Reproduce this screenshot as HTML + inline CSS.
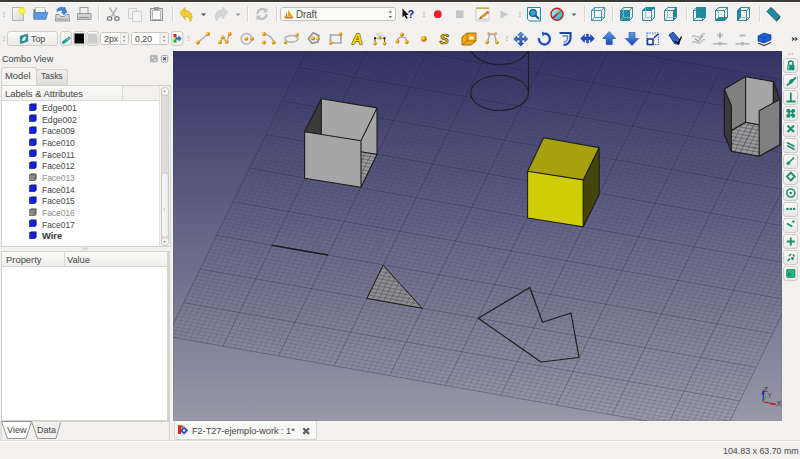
<!DOCTYPE html>
<html><head><meta charset="utf-8">
<style>
*{margin:0;padding:0;box-sizing:border-box}
html,body{width:800px;height:459px;overflow:hidden;background:#f2f1f0;font-family:"Liberation Sans",sans-serif;color:#3c3c3c}
.a{position:absolute}
#topbar{left:0;top:0;width:800px;height:2px;background:#3c3b37}
#topline{left:0;top:2px;width:800px;height:1px;background:#fbfbfa}
.sep{position:absolute;width:1px;background:#d8d6d2;border-right:1px solid #fcfcfb}
.grip{position:absolute;width:2px;height:6px;background:repeating-linear-gradient(#c9c7c2 0 1px,transparent 1px 2px)}
.btn{position:absolute;border:1px solid #cfccc7;border-radius:3px;background:linear-gradient(#fbfbfa,#ecebe9)}
.txt{position:absolute;white-space:nowrap;font-size:9px;color:#3c3c3c;line-height:1;-webkit-text-stroke:0.2px rgba(80,80,80,0.45)}
svg{position:absolute;overflow:visible}
</style></head><body>
<div id="topbar" class="a"></div><div id="topline" class="a"></div>
<svg class="a" style="left:0;top:0" width="800" height="27" viewBox="0 0 800 27">
<defs>
<linearGradient id="pg" x1="0" y1="0" x2="1" y2="1"><stop offset="0" stop-color="#fafafa"/><stop offset="1" stop-color="#d8d8d8"/></linearGradient>
<radialGradient id="yg"><stop offset="0" stop-color="#ffffa0"/><stop offset="0.5" stop-color="#f4f020"/><stop offset="1" stop-color="#f4f020" stop-opacity="0"/></radialGradient>
</defs>
<!-- grip -->
<g fill="#c8c6c1"><rect x="3" y="12" width="2" height="1"/><rect x="3" y="14" width="2" height="1"/><rect x="3" y="16" width="2" height="1"/></g>
<!-- new -->
<rect x="12.5" y="7.5" width="11" height="13" fill="url(#pg)" stroke="#b4b4b4"/>
<circle cx="21.8" cy="10.8" r="4.6" fill="url(#yg)"/>
<!-- open -->
<path d="M33.5 9h4.5l1 1h7v9h-12.5z" fill="#7a7a7a"/><rect x="35.5" y="7.5" width="9.5" height="6" fill="#f6f6f6" stroke="#b8b8b8" stroke-width="0.6"/>
<path d="M34 12.5h13.8l-2 6.8h-11.8z" fill="#5a9ae0" stroke="#3a72b8" stroke-width="0.7"/>
<!-- save -->
<path d="M56 14.5h3l1.5 2h4l1.5-2h3l0.5 6.5h-14z" fill="#d8d8d8" stroke="#8c8c8c" stroke-width="0.9"/><rect x="57" y="18.5" width="11" height="1.2" fill="#a0a0a0"/>
<path d="M57 9.5c2-2.5 5.5-3 7.5-1v-1.5l0 0 2.5 5.5h-5.5l1.5-1.5c-1.5-1-3.5-0.8-6 0.5z" fill="#3f86cc" stroke="#24599a" stroke-width="0.5"/>
<path d="M61.5 12h5l-2.5 3.5z" fill="#3f86cc"/>
<!-- print -->
<rect x="80" y="7.5" width="8" height="6" fill="#f0f0f0" stroke="#9c9c9c"/>
<path d="M77.5 13.5h13.5v6h-13.5z" fill="#d0d0d0" stroke="#9a9a9a"/><rect x="79" y="17" width="10" height="1" fill="#8a8a8a"/>
<!-- sep -->
<rect x="98" y="6" width="1" height="16" fill="#d9d7d3"/><rect x="99" y="6" width="1" height="16" fill="#fbfbfa"/>
<!-- cut -->
<g stroke="#7a7a7a" fill="none" stroke-width="1.2"><path d="M109.5 7.5l5.5 9M117 7.5l-5.5 9" stroke="#b8b8b8" stroke-width="1.5"/><ellipse cx="109.6" cy="18.6" rx="2.2" ry="1.9"/><ellipse cx="116.9" cy="18.6" rx="2.2" ry="1.9"/></g>
<!-- copy -->
<path d="M128.5 8.5h8v10h-8z" fill="#f0f0f0" stroke="#d0d0d0"/><path d="M132.5 11.5h9v10h-9z" fill="#f4f4f4" stroke="#cfcfcf"/>
<!-- paste -->
<path d="M150.5 8.5h12v12h-12z" fill="#e6e6e6" stroke="#8e8e8e"/><rect x="152.5" y="10.5" width="8" height="9" fill="#fafafa" stroke="#b4b4b4"/><rect x="154" y="7" width="5" height="3" fill="#9a9a9a"/>
<rect x="172" y="6" width="1" height="16" fill="#d9d7d3"/><rect x="173" y="6" width="1" height="16" fill="#fbfbfa"/>
<!-- undo -->
<path d="M180 12.5l5-5v3c4 0 7 2.5 7 6.5 0 2-1 3.5-2 4.5 0.5-3-1.5-5-5-5v3z" fill="#f2cd36" stroke="#d9a91a" stroke-width="0.8"/>
<path d="M201 13.5h5l-2.5 2.5z" fill="#4a4a4a"/>
<!-- redo -->
<path d="M227.5 12l-5-5v3c-4 0-7 2.5-7 6.5 0 2 1 3.5 2 4.5-0.5-3 1.5-5 5-5v3z" fill="#d6d6d6" stroke="#c4c4c4" stroke-width="0.6"/>
<path d="M235.5 13.5h5l-2.5 2.5z" fill="#9a9a9a"/>
<rect x="247" y="6" width="1" height="16" fill="#d9d7d3"/><rect x="248" y="6" width="1" height="16" fill="#fbfbfa"/>
<!-- refresh -->
<g fill="none" stroke="#c2c2c2" stroke-width="2.4"><path d="M257.5 14a5 5 0 0 1 9-3"/><path d="M266.5 14a5 5 0 0 1 -9 3"/></g>
<path d="M267.5 7.5v5h-5z" fill="#c2c2c2"/><path d="M256.5 20.5v-5h5z" fill="#c2c2c2"/>
<rect x="276" y="6" width="1" height="16" fill="#d9d7d3"/><rect x="277" y="6" width="1" height="16" fill="#fbfbfa"/>
<!-- combo -->
<rect x="280.5" y="7.5" width="115" height="13" rx="2.5" fill="#fbfbfa" stroke="#c2bfb9"/>
<path d="M288 9.5l4.5 6.5h-4.5z" fill="#e0b010"/><path d="M284.5 16.5h9l-1 2h-8z" fill="#c87818"/><path d="M286.5 11l1 5.5h-2z" fill="#d08a20"/>
<path d="M388.5 12.5l1.8-2 1.8 2z M388.5 16l1.8 2 1.8-2z" fill="#6a6a6a"/>
<!-- whats this -->
<path d="M402.5 8.5v9l2-2 1.8 3.5 1.4-0.7-1.7-3.3h2.8z" fill="#111"/>
<text x="407.5" y="17.5" font-family="Liberation Sans" font-weight="bold" font-size="11" fill="#1a2a90">?</text>
<g fill="#c8c6c1"><rect x="423" y="12" width="2" height="1"/><rect x="423" y="14" width="2" height="1"/><rect x="423" y="16" width="2" height="1"/></g>
<!-- record -->
<circle cx="437.8" cy="14.2" r="3.9" fill="#e8202a"/>
<rect x="456" y="10.5" width="7.5" height="7.5" fill="#c4c4c4"/>
<!-- macro edit -->
<rect x="476" y="8" width="13" height="13" rx="1" fill="#f8f8f4" stroke="#c4c0b8" stroke-width="0.8"/><rect x="476" y="7.5" width="13" height="1.6" fill="#c8a850"/><rect x="476.5" y="18.5" width="12" height="2" fill="#d8d8d4"/>
<path d="M480 17l6.5-5 1.5 1.5-6.5 5z" fill="#e89828" stroke="#a06010" stroke-width="0.4"/><path d="M479.3 18.8l0.7-1.8 1.4 1.4z" fill="#333"/><path d="M486.5 12l1.2-0.9 1.5 1.5-1 0.9z" fill="#e04040"/>
<path d="M500.5 10.5l8 4-8 4z" fill="#c8c8c8"/>
<g fill="#c8c6c1"><rect x="519" y="12" width="2" height="1"/><rect x="519" y="14" width="2" height="1"/><rect x="519" y="16" width="2" height="1"/></g>
<!-- fit all -->
<path d="M527.5 7.5h13v13.5h-11l-2-2z" fill="#eef6f8" stroke="#1e8aa0"/>
<circle cx="533" cy="13" r="3.3" fill="#3aa0d8" stroke="#1a5a88" stroke-width="1.2"/><path d="M535.5 15.5l3.5 3.5" stroke="#1a5a88" stroke-width="2"/>
<!-- drawstyle -->
<defs><linearGradient id="cy" x1="0" y1="0" x2="1" y2="1"><stop offset="0" stop-color="#e8f8f8"/><stop offset="0.55" stop-color="#40d0d8"/><stop offset="1" stop-color="#20b0c0"/></linearGradient></defs>
<circle cx="557" cy="14.2" r="5.8" fill="url(#cy)"/>
<circle cx="557" cy="14.2" r="6" fill="none" stroke="#c41c1c" stroke-width="1.4"/><path d="M552.8 18.4l8.4-8.4" stroke="#c41c1c" stroke-width="1.5"/><path d="M557.5 13.2l3.5-3.6" stroke="#f0e040" stroke-width="0.9"/>
<path d="M571.5 13.5h5l-2.5 2.5z" fill="#5a5a5a"/>
<rect x="584" y="6" width="1" height="16" fill="#d9d7d3"/><rect x="585" y="6" width="1" height="16" fill="#fbfbfa"/>
<!-- view cubes -->
<g fill="none" stroke="#2b97ad" stroke-width="0.9">
<path d="M591.5 10.5l3-3h10v10l-3 3h-10z M591.5 10.5h10v10 M601.5 10.5l3-3 M594.5 7.5v10h10 M594.5 17.5l-3 3"/>
</g>
<rect x="612" y="6" width="1" height="16" fill="#d9d7d3"/><rect x="613" y="6" width="1" height="16" fill="#fbfbfa"/>
<g stroke="#1f7f95" stroke-width="0.9">
<path d="M620.5 10.5h9v10h-9z" fill="#1d8ca4"/><path d="M620.5 10.5l3-3h9v10l-3 3M629.5 10.5l3-3" fill="none"/><path d="M623.5 7.5v10h9M623.5 17.5l-3 3" fill="none" stroke="#7cc0cc"/>
<path d="M642.5 10.5l3-3h9l-3 3z" fill="#1d8ca4"/><path d="M642.5 10.5h9v10h-9zM651.5 10.5l3-3v10l-3 3" fill="none"/><path d="M645.5 7.5v10h9M645.5 17.5l-3 3" fill="none" stroke="#7cc0cc"/>
<path d="M673.5 10.5l3-3v10l-3 3z" fill="#1d8ca4"/><path d="M664.5 10.5h9v10h-9zM664.5 10.5l3-3h9" fill="none"/><path d="M667.5 7.5v10h9M667.5 17.5l-3 3" fill="none" stroke="#7cc0cc"/>
</g>
<rect x="686" y="6" width="1" height="16" fill="#d9d7d3"/><rect x="687" y="6" width="1" height="16" fill="#fbfbfa"/>
<g stroke="#1f7f95" stroke-width="0.9">
<path d="M696.5 7.5h9v10h-9z" fill="#1d8ca4"/><path d="M693.5 10.5h9v10h-9zM693.5 10.5l3-3M702.5 10.5l3-3M705.5 17.5l-3 3M696.5 17.5l-3 3" fill="none"/>
<path d="M715.5 20.5l3-3h9l-3 3z" fill="#1d8ca4"/><path d="M715.5 10.5h9v10h-9zM715.5 10.5l3-3h9v10M724.5 10.5l3-3" fill="none"/><path d="M718.5 7.5v10" fill="none" stroke="#7cc0cc"/>
<path d="M737.5 10.5l3-3v10l-3 3z" fill="#1d8ca4"/><path d="M737.5 10.5h9v10h-9zM740.5 7.5h9v10l-3 3M746.5 10.5l3-3" fill="none"/><path d="M740.5 17.5h9" fill="none" stroke="#7cc0cc"/>
</g>
<rect x="759" y="6" width="1" height="16" fill="#d9d7d3"/><rect x="760" y="6" width="1" height="16" fill="#fbfbfa"/>
<!-- measure -->
<path d="M767 11.5l4-4 9 9-4 4z" fill="#1d8ca4" stroke="#0f4e60"/><path d="M776 20.5l4-4v1.5l-4 4z" fill="#333"/>
</svg>

<svg class="a" style="left:0;top:27px" width="800" height="24" viewBox="0 27 800 24">
<defs>
<linearGradient id="bt" x1="0" y1="0" x2="0" y2="1"><stop offset="0" stop-color="#fcfcfb"/><stop offset="1" stop-color="#eae8e5"/></linearGradient>
<radialGradient id="od" cx="0.35" cy="0.35"><stop offset="0" stop-color="#ffe070"/><stop offset="0.6" stop-color="#f4a810"/><stop offset="1" stop-color="#c87800"/></radialGradient>
<linearGradient id="bl" x1="0" y1="0" x2="0" y2="1"><stop offset="0" stop-color="#5aa0f0"/><stop offset="1" stop-color="#1848b8"/></linearGradient>
</defs>
<g fill="#c8c6c1"><rect x="3" y="36" width="2" height="1"/><rect x="3" y="38" width="2" height="1"/><rect x="3" y="40" width="2" height="1"/></g>
<!-- Top button -->
<rect x="7.5" y="31.5" width="50" height="14" rx="2.5" fill="url(#bt)" stroke="#cfccc7"/>
<path d="M20.2 36.2L27.6 33.9L27.9 41.2L20.4 43.7Z" fill="#1a9aa0" stroke="#0f6a70" stroke-width="0.5" stroke-linejoin="round"/><ellipse cx="24.1" cy="38.8" rx="1.8" ry="3.1" transform="rotate(38 24.1 38.8)" fill="#f4fafa" stroke="#0a4a50" stroke-width="0.5"/>
<!-- eraser btn -->
<rect x="60.5" y="31.5" width="11" height="14" rx="2.5" fill="url(#bt)" stroke="#cfccc7"/>
<path d="M62.3 41.5l5.5-4.2c1-0.8 2.4-0.6 2.8 0.3 0.3 0.8-0.2 1.5-0.8 1.9l-5.5 4c-1 0.6-2.2 0.4-2.5-0.5z" fill="#1e9a90"/><path d="M66.5 40.2l3.6-2.6" stroke="#a0e0d8" stroke-width="0.9"/>
<!-- black btn -->
<rect x="73.5" y="31.5" width="12" height="14" rx="2.5" fill="url(#bt)" stroke="#cfccc7"/>
<rect x="74.5" y="33.5" width="9.5" height="10" fill="#000"/>
<rect x="87" y="31.5" width="12" height="14" rx="2.5" fill="url(#bt)" stroke="#cfccc7"/>
<rect x="88" y="33.5" width="9.5" height="10" fill="#cdcdcd"/>
<!-- spinboxes -->
<rect x="100.5" y="32.5" width="28" height="12" rx="2" fill="#fefefe" stroke="#cac7c2"/>
<rect x="120" y="33" width="8" height="11" fill="#f2f1ef"/><rect x="120" y="33" width="1" height="11" fill="#dedcd8"/>
<path d="M122.8 37.2l1.3-1.4 1.3 1.4zM122.8 40.2l1.3 1.4 1.3-1.4z" fill="#6a6a6a"/>
<rect x="131.5" y="32.5" width="37" height="12" rx="2" fill="#fefefe" stroke="#cac7c2"/>
<rect x="159.5" y="33" width="8.5" height="11" fill="#f2f1ef"/><rect x="159.5" y="33" width="1" height="11" fill="#dedcd8"/>
<path d="M162.8 37.2l1.3-1.4 1.3 1.4zM162.8 40.2l1.3 1.4 1.3-1.4z" fill="#6a6a6a"/>
<!-- construction btn -->
<rect x="171.5" y="31.5" width="11.5" height="14" rx="2.5" fill="url(#bt)" stroke="#cfccc7"/>
<rect x="173.5" y="34" width="3" height="3" fill="#e02020"/><rect x="173.5" y="37" width="3" height="2.5" fill="#f0d020"/><rect x="173.5" y="39.5" width="3" height="3" fill="#20b030"/>
<path d="M175.5 37.2h3v-2l3.2 3.3-3.2 3.3v-2h-3z" fill="#2a70d8"/>
<g fill="#c8c6c1"><rect x="187.5" y="36" width="2" height="1"/><rect x="187.5" y="38" width="2" height="1"/><rect x="187.5" y="40" width="2" height="1"/></g>
<!-- draft tools -->
<g stroke="#b4b4b4" stroke-width="1.6" fill="none">
<path d="M197.8 42.5L208 34"/>
<path d="M220 42.2L222.7 37.3L226.7 41.8L229.7 34"/>
<circle cx="246.5" cy="38.8" r="5.3" stroke="#bdbdbd" stroke-width="1.8"/>
<path d="M264 34c5 1 8.5 4 9.7 8.5"/>
<ellipse cx="291.5" cy="38.8" rx="6.5" ry="3.3"/>
<path d="M313.2 32.8l5.6 2.8-0.8 6.2-6 1.6-3.6-4.6z" stroke="#9a9a9a" stroke-width="1.8" stroke-linejoin="round"/>
<path d="M330.5 35h10.5v8h-10.5z" stroke="#a6a6a6" stroke-width="1.6"/>
<path d="M375 38.2h9.5" stroke="#9a9a9a" stroke-width="0.9"/><path d="M375 38v5.5M384.5 38v5.5" stroke="#444" stroke-width="0.9"/><rect x="374" y="37.2" width="2" height="2" fill="#222" stroke="none"/><rect x="383.5" y="37.2" width="2" height="2" fill="#222" stroke="none"/><path d="M376 32.5l1 3 1-2 1 2 1-3M381 32.5v3h2" stroke="#c8c8c8" stroke-width="0.7"/>
<path d="M397 43c0-8 10-8 10 0" stroke="#a8a8a8" stroke-width="1.5"/>
<path d="M488 43c0-7 2-9 4-9s4 2 4 9" stroke="#a8a8a8" stroke-width="1.5"/>
</g>
<g fill="url(#od)">
<circle cx="197.8" cy="42.5" r="2"/><circle cx="208" cy="34" r="2"/>
<circle cx="220" cy="42.2" r="1.9"/><circle cx="222.7" cy="37.3" r="1.9"/><circle cx="226.7" cy="41.8" r="1.9"/><circle cx="229.7" cy="34" r="1.9"/>
<circle cx="246.2" cy="38.8" r="1.9"/><circle cx="252" cy="38.8" r="1.9"/>
<circle cx="264" cy="34" r="1.9"/><circle cx="264" cy="42.5" r="1.9"/><circle cx="273.7" cy="42.5" r="1.9"/>
<circle cx="285.5" cy="42.5" r="1.7"/><circle cx="297.2" cy="34.7" r="1.7"/>
<circle cx="313" cy="38.5" r="1.9"/><circle cx="318" cy="38.8" r="1.8"/>
<circle cx="330.8" cy="43" r="1.8"/><circle cx="340.5" cy="34" r="1.8"/>
<circle cx="379.8" cy="37.8" r="1.7"/><circle cx="375" cy="43.6" r="1.8"/><circle cx="384.6" cy="43.6" r="1.8"/>
<circle cx="397.5" cy="41.5" r="1.9"/><circle cx="402" cy="34.5" r="1.9"/><circle cx="406.8" cy="42" r="1.9"/>
<circle cx="423.8" cy="38.8" r="2.9"/>
<circle cx="487" cy="42.5" r="1.8"/><circle cx="497" cy="42.5" r="1.8"/><circle cx="488.5" cy="33.5" r="1.2"/><circle cx="495.5" cy="33.5" r="1.2"/>
</g>
<text x="351.5" y="44.3" font-family="Liberation Sans" font-weight="bold" font-size="15" fill="#f8dc00" stroke="#4a3c00" stroke-width="1.1" paint-order="stroke" transform="skewX(-6) translate(4.6 0)">A</text>
<text x="439.5" y="44" font-family="Liberation Sans" font-weight="bold" font-style="italic" font-size="14" fill="#e8d010" stroke="#5a4a00" stroke-width="0.7">S</text>
<path d="M462 37l5-4h9v8l-5 4h-9z" fill="#f4a818" stroke="#8a5a00" stroke-width="0.8"/><path d="M467 33v8h9M467 41l-5 4" stroke="#b06a00" stroke-width="0.8" fill="none"/><path d="M469.5 36.5h4v3h-4z" fill="#fff2c0"/>
<g fill="#c8c6c1"><rect x="506" y="36" width="2" height="1"/><rect x="506" y="38" width="2" height="1"/><rect x="506" y="40" width="2" height="1"/></g>
<!-- move -->
<path d="M520.8 32l3 3h-2v3h3v-2l3 3-3 3v-2h-3v3h2l-3 3-3-3h2v-3h-3v2l-3-3 3-3v2h3v-3h-2z" fill="url(#bl)" stroke="#103080" stroke-width="0.5"/>
<!-- rotate -->
<path d="M539 38a5.5 5.5 0 1 0 6-4.5" fill="none" stroke="#2050c0" stroke-width="2.4"/><path d="M542 31.5l4 2-3.5 3z" fill="#2050c0"/>
<!-- offset -->
<path d="M559.5 33h11v5c0 4-3 7-7 7" fill="none" stroke="#1a4aa8" stroke-width="2.2"/><path d="M562.5 36h5v2c0 2-1.5 4-4 4" fill="none" stroke="#4a80d8" stroke-width="1.3"/>
<!-- trimex / stretch -->
<path d="M580.5 38.5l4-4v2.5h2v-3h2v3h2v-2.5l4 4-4 4v-2.5h-2v3h-2v-3h-2v2.5z" fill="#2050c8" stroke="#102a80" stroke-width="0.4"/>
<!-- upgrade/downgrade -->
<path d="M609.2 31.5l6.5 7h-3.5v6h-6v-6h-3.5z" fill="url(#bl)" stroke="#103080" stroke-width="0.5"/>
<path d="M632 45.5l6.5-7h-3.5v-6h-6v6h-3.5z" fill="url(#bl)" stroke="#103080" stroke-width="0.5"/>
<!-- scale -->
<rect x="647" y="33" width="11.5" height="11.5" fill="none" stroke="#3a7ae0" stroke-width="1.2" stroke-dasharray="1.5 1"/>
<rect x="647.5" y="39" width="5.5" height="5.5" fill="#ffffff" stroke="#1a3a98" stroke-width="1.6"/><path d="M654 38l4-4" stroke="#1a3a98" stroke-width="1.5"/>
<!-- edit -->
<path d="M669 35l4-3 7 8-1 4.5-4.5-1z" fill="#2a68c8" stroke="#101a60" stroke-width="0.8"/><path d="M674.5 41l3.5 2.5 3.5-7" fill="none" stroke="#111" stroke-width="1.4"/>
<!-- wire2spline -->
<g fill="none" stroke="#c0c0c0" stroke-width="1.5"><path d="M692 37c3-4 6 3 9-1s3-2 4-2"/><path d="M692 43c3-4 6 3 9-1s3-2 4-2"/><path d="M695 38.5l3 3 5-6" stroke="#a8a8a8"/></g>
<!-- add/del point -->
<g fill="#b8b8b8"><rect x="713" y="43" width="14" height="1.6"/><circle cx="720" cy="43.8" r="2"/><rect x="719" y="32.5" width="2" height="6"/><rect x="717" y="34.5" width="6" height="2"/>
<rect x="735.5" y="43" width="14" height="1.6"/><circle cx="742.5" cy="43.8" r="2"/><rect x="739.5" y="34.5" width="6" height="2"/></g>
<!-- shape2dview -->
<path d="M758 36l6-3 7 2v5l-7 3-6-2z" fill="#1a60d8" stroke="#0a2a80" stroke-width="0.6"/><path d="M758 36l6 2 7-3M764 38v5" fill="none" stroke="#0a3aa0" stroke-width="0.6"/>
<path d="M758 43l6 2.5 7-3" fill="none" stroke="#444" stroke-width="1.2"/>
<path d="M792 37.5l2 1.5-2 1.5M795 37.5l2 1.5-2 1.5" fill="none" stroke="#333" stroke-width="1.1"/>
</svg>

<div class="a" style="left:0;top:51px;width:171px;height:390px"></div>
<svg class="a" style="left:150px;top:55px" width="18" height="8" viewBox="0 0 18 8">
<rect x="0.4" y="0.3" width="7" height="6.7" rx="1.2" fill="#b4b4b4" stroke="#a8a8a8" stroke-width="0.6"/><path d="M2.2 2.2l1.2 1.2M4.6 4.6l1.2 1.2" stroke="#fff" stroke-width="1.1"/>
<rect x="11.3" y="0.5" width="6.5" height="6.5" rx="1.2" fill="#ececea" stroke="#9a9a9a" stroke-width="0.8"/><path d="M13.1 2.3l2.9 2.9M16 2.3l-2.9 2.9" stroke="#4a4a4a" stroke-width="1.2"/>
</svg>
<!-- tabs -->
<div class="a" style="left:36px;top:68.5px;width:31.5px;height:16.5px;border:1px solid #d3d1cc;border-bottom:none;border-radius:3px 3px 0 0;background:linear-gradient(#f0efed,#dedcd8)"></div>
<div class="a" style="left:1px;top:66.5px;width:35.5px;height:19px;border:1px solid #d3d1cc;border-bottom:none;border-radius:3px 3px 0 0;background:#f5f4f2"></div>
<!-- tab pane -->
<div class="a" style="left:1px;top:85px;width:169.5px;height:162px;border:1px solid #d3d1cc;background:#f5f4f2"></div>
<div class="a" style="left:2px;top:86px;width:156.5px;height:160px;background:#ffffff"></div>
<div class="a" style="left:2px;top:86px;width:156.5px;height:15px;background:#f2f1f0;border-bottom:1px solid #dcdad5"></div>
<div class="a" style="left:2px;top:86px;width:121px;height:15px;background:linear-gradient(#fbfbfa,#f1f0ee);border-right:1px solid #dcdad5;border-bottom:1px solid #dcdad5"></div>
<!-- scrollbar -->
<div class="a" style="left:158.5px;top:86px;width:11px;height:160px;background:#f3f2f0;border-left:1px solid #e4e2de"></div>
<div class="a" style="left:160.5px;top:86.5px;width:8px;height:159px;border-radius:4px;background:#dedcd8;border:1px solid #d2d0cb"></div>
<div class="a" style="left:160.5px;top:86.5px;width:8px;height:9px;border-radius:4px 4px 3px 3px;background:linear-gradient(#fdfdfc,#f0efed);border:1px solid #cfccc7"></div>
<div class="a" style="left:160.5px;top:237px;width:8px;height:9px;border-radius:3px 3px 4px 4px;background:linear-gradient(#f0efed,#fdfdfc);border:1px solid #cfccc7"></div>
<div class="a" style="left:160.5px;top:172px;width:8px;height:66px;border-radius:4px;background:linear-gradient(90deg,#f8f8f7,#efeeec);border:1px solid #cbc8c3"></div>
<svg class="a" style="left:158px;top:86px" width="12" height="160" viewBox="0 0 12 160"><path d="M5.2 5.5l1.3-1.3 1.3 1.3z" fill="#555"/><path d="M5.2 155.5l1.3 1.3 1.3-1.3z" fill="#555"/><rect x="5.8" y="122" width="1" height="1" fill="#b8b6b0"/><rect x="5.8" y="124" width="1" height="1" fill="#b8b6b0"/></svg>
<svg class="a" style="left:29px;top:102.6px" width="8" height="8" viewBox="0 0 8 8"><path d="M0.5 1.8L2 0.4H7.6L6.1 1.8Z" fill="#080860"/><path d="M6.1 1.8L7.6 0.4V6.2L6.1 7.6Z" fill="#0a18b8"/><rect x="0.5" y="1.8" width="5.6" height="5.8" fill="#1020f8" stroke="#000030" stroke-width="0.5"/></svg><svg class="a" style="left:29px;top:114.3px" width="8" height="8" viewBox="0 0 8 8"><path d="M0.5 1.8L2 0.4H7.6L6.1 1.8Z" fill="#080860"/><path d="M6.1 1.8L7.6 0.4V6.2L6.1 7.6Z" fill="#0a18b8"/><rect x="0.5" y="1.8" width="5.6" height="5.8" fill="#1020f8" stroke="#000030" stroke-width="0.5"/></svg><svg class="a" style="left:29px;top:125.9px" width="8" height="8" viewBox="0 0 8 8"><path d="M0.5 1.8L2 0.4H7.6L6.1 1.8Z" fill="#080860"/><path d="M6.1 1.8L7.6 0.4V6.2L6.1 7.6Z" fill="#0a18b8"/><rect x="0.5" y="1.8" width="5.6" height="5.8" fill="#1020f8" stroke="#000030" stroke-width="0.5"/></svg><svg class="a" style="left:29px;top:137.6px" width="8" height="8" viewBox="0 0 8 8"><path d="M0.5 1.8L2 0.4H7.6L6.1 1.8Z" fill="#080860"/><path d="M6.1 1.8L7.6 0.4V6.2L6.1 7.6Z" fill="#0a18b8"/><rect x="0.5" y="1.8" width="5.6" height="5.8" fill="#1020f8" stroke="#000030" stroke-width="0.5"/></svg><svg class="a" style="left:29px;top:149.3px" width="8" height="8" viewBox="0 0 8 8"><path d="M0.5 1.8L2 0.4H7.6L6.1 1.8Z" fill="#080860"/><path d="M6.1 1.8L7.6 0.4V6.2L6.1 7.6Z" fill="#0a18b8"/><rect x="0.5" y="1.8" width="5.6" height="5.8" fill="#1020f8" stroke="#000030" stroke-width="0.5"/></svg><svg class="a" style="left:29px;top:161.0px" width="8" height="8" viewBox="0 0 8 8"><path d="M0.5 1.8L2 0.4H7.6L6.1 1.8Z" fill="#080860"/><path d="M6.1 1.8L7.6 0.4V6.2L6.1 7.6Z" fill="#0a18b8"/><rect x="0.5" y="1.8" width="5.6" height="5.8" fill="#1020f8" stroke="#000030" stroke-width="0.5"/></svg><svg class="a" style="left:29px;top:172.6px" width="8" height="8" viewBox="0 0 8 8"><path d="M0.5 1.8L2 0.4H7.6L6.1 1.8Z" fill="#4a4a4a"/><path d="M6.1 1.8L7.6 0.4V6.2L6.1 7.6Z" fill="#6a6a6a"/><rect x="0.5" y="1.8" width="5.6" height="5.8" fill="#8c8c8c" stroke="#3a3a3a" stroke-width="0.5"/></svg><svg class="a" style="left:29px;top:184.3px" width="8" height="8" viewBox="0 0 8 8"><path d="M0.5 1.8L2 0.4H7.6L6.1 1.8Z" fill="#080860"/><path d="M6.1 1.8L7.6 0.4V6.2L6.1 7.6Z" fill="#0a18b8"/><rect x="0.5" y="1.8" width="5.6" height="5.8" fill="#1020f8" stroke="#000030" stroke-width="0.5"/></svg><svg class="a" style="left:29px;top:196.0px" width="8" height="8" viewBox="0 0 8 8"><path d="M0.5 1.8L2 0.4H7.6L6.1 1.8Z" fill="#080860"/><path d="M6.1 1.8L7.6 0.4V6.2L6.1 7.6Z" fill="#0a18b8"/><rect x="0.5" y="1.8" width="5.6" height="5.8" fill="#1020f8" stroke="#000030" stroke-width="0.5"/></svg><svg class="a" style="left:29px;top:207.6px" width="8" height="8" viewBox="0 0 8 8"><path d="M0.5 1.8L2 0.4H7.6L6.1 1.8Z" fill="#4a4a4a"/><path d="M6.1 1.8L7.6 0.4V6.2L6.1 7.6Z" fill="#6a6a6a"/><rect x="0.5" y="1.8" width="5.6" height="5.8" fill="#8c8c8c" stroke="#3a3a3a" stroke-width="0.5"/></svg><svg class="a" style="left:29px;top:219.3px" width="8" height="8" viewBox="0 0 8 8"><path d="M0.5 1.8L2 0.4H7.6L6.1 1.8Z" fill="#080860"/><path d="M6.1 1.8L7.6 0.4V6.2L6.1 7.6Z" fill="#0a18b8"/><rect x="0.5" y="1.8" width="5.6" height="5.8" fill="#1020f8" stroke="#000030" stroke-width="0.5"/></svg><svg class="a" style="left:29px;top:231.0px" width="8" height="8" viewBox="0 0 8 8"><path d="M0.5 1.8L2 0.4H7.6L6.1 1.8Z" fill="#080860"/><path d="M6.1 1.8L7.6 0.4V6.2L6.1 7.6Z" fill="#0a18b8"/><rect x="0.5" y="1.8" width="5.6" height="5.8" fill="#1020f8" stroke="#000030" stroke-width="0.5"/></svg><!-- splitter grip -->
<svg class="a" style="left:82px;top:247px" width="7" height="3"><rect x="0.5" y="0.5" width="1" height="2" fill="#c0beb9"/><rect x="2.5" y="0.5" width="1" height="2" fill="#c0beb9"/><rect x="4.5" y="0.5" width="1" height="2" fill="#c0beb9"/></svg>
<!-- property view -->
<div class="a" style="left:1px;top:251px;width:169px;height:170px;border:1px solid #d3d1cc;background:#f2f1f0"></div>
<div class="a" style="left:2px;top:252px;width:165px;height:168px;background:#ffffff"></div><div class="a" style="left:167px;top:252px;width:3px;height:168px;background:#d6d3cf"></div>
<div class="a" style="left:2px;top:252px;width:164.5px;height:15px;background:linear-gradient(#fbfbfa,#f0efed);border-bottom:1px solid #d8d6d1"></div>
<div class="a" style="left:64px;top:252px;width:1px;height:14px;background:#dcdad5"></div>
<!-- bottom tabs -->
<svg class="a" style="left:0;top:420px" width="171" height="22" viewBox="0 420 171 22">
<path d="M1 421.5h168.5" stroke="#d3d1cc"/>
<path d="M1.5 421.5L7.5 438.5h18.5l5.5-17z" fill="#ffffff" stroke="#8c8a86" stroke-width="0.9"/>
<path d="M31.5 421.5l6 17h18.5l4.5-16" fill="#f2f1f0" stroke="#8c8a86" stroke-width="0.9"/>
<path d="M1 440.5h169" stroke="#d3d1cc"/><path d="M169.5 421v19.5M1 421v19.5" stroke="#d3d1cc"/>
</svg>

<svg class="a" style="left:173px;top:51px;width:609px;height:370px;overflow:hidden" width="609" height="370" viewBox="0 0 609 370">
<defs><linearGradient id="bg" x1="0" y1="0" x2="0" y2="1"><stop offset="0" stop-color="#333366"/><stop offset="1" stop-color="#9898a7"/></linearGradient></defs>
<rect width="609" height="370" fill="url(#bg)"/>
<defs><linearGradient id="gmin" gradientUnits="userSpaceOnUse" x1="0" y1="51" x2="0" y2="421"><stop offset="0" stop-color="#101030" stop-opacity="0.06"/><stop offset="1" stop-color="#101030" stop-opacity="0.13"/></linearGradient><linearGradient id="gmaj" gradientUnits="userSpaceOnUse" x1="0" y1="51" x2="0" y2="421"><stop offset="0" stop-color="#101030" stop-opacity="0.24"/><stop offset="1" stop-color="#101030" stop-opacity="0.3"/></linearGradient></defs><g transform="translate(-173,-51)"><g><path d="M172.87 337.29L337.20 0.96M168.95 332.95L724.95 431.19M178.43 338.27L342.76 1.94M170.60 329.58L726.60 427.82M183.99 339.26L348.32 2.93M172.24 326.22L728.24 424.46M189.55 340.24L353.88 3.91M173.88 322.86L729.88 421.10M195.11 341.22L359.44 4.89M175.53 319.49L731.53 417.73M200.67 342.20L365.00 5.87M177.17 316.13L733.17 414.37M206.23 343.19L370.56 6.86M178.81 312.77L734.81 411.01M211.79 344.17L376.12 7.84M180.46 309.40L736.46 407.64M217.35 345.15L381.68 8.82M182.10 306.04L738.10 404.28M228.47 347.12L392.80 10.79M185.39 299.31L741.39 397.55M234.03 348.10L398.36 11.77M187.03 295.95L743.03 394.19M239.59 349.08L403.92 12.75M188.67 292.59L744.67 390.83M245.15 350.06L409.48 13.73M190.32 289.22L746.32 387.46M250.71 351.05L415.04 14.72M191.96 285.86L747.96 384.10M256.27 352.03L420.60 15.70M193.60 282.50L749.60 380.74M261.83 353.01L426.16 16.68M195.25 279.13L751.25 377.37M267.39 353.99L431.72 17.66M196.89 275.77L752.89 374.01M272.95 354.98L437.28 18.65M198.53 272.41L754.53 370.65M284.07 356.94L448.40 20.61M201.82 265.68L757.82 363.92M289.63 357.92L453.96 21.59M203.46 262.32L759.46 360.56M295.19 358.91L459.52 22.58M205.11 258.95L761.11 357.19M300.75 359.89L465.08 23.56M206.75 255.59L762.75 353.83M306.31 360.87L470.64 24.54M208.39 252.23L764.39 350.47M311.87 361.85L476.20 25.52M210.04 248.86L766.04 347.10M317.43 362.83L481.76 26.50M211.68 245.50L767.68 343.74M322.99 363.82L487.32 27.49M213.32 242.14L769.32 340.38M328.55 364.80L492.88 28.47M214.97 238.77L770.97 337.01M339.67 366.76L504.00 30.43M218.25 232.05L774.25 330.29M345.23 367.75L509.56 31.42M219.90 228.68L775.90 326.92M350.79 368.73L515.12 32.40M221.54 225.32L777.54 323.56M356.35 369.71L520.68 33.38M223.18 221.96L779.18 320.20M361.91 370.69L526.24 34.36M224.83 218.59L780.83 316.83M367.47 371.68L531.80 35.35M226.47 215.23L782.47 313.47M373.03 372.66L537.36 36.33M228.11 211.87L784.11 310.11M378.59 373.64L542.92 37.31M229.76 208.50L785.76 306.74M384.15 374.62L548.48 38.29M231.40 205.14L787.40 303.38M395.27 376.59L559.60 40.26M234.69 198.41L790.69 296.65M400.83 377.57L565.16 41.24M236.33 195.05L792.33 293.29M406.39 378.55L570.72 42.22M237.97 191.69L793.97 289.93M411.95 379.54L576.28 43.21M239.62 188.32L795.62 286.56M417.51 380.52L581.84 44.19M241.26 184.96L797.26 283.20M423.07 381.50L587.40 45.17M242.90 181.60L798.90 279.84M428.63 382.48L592.96 46.15M244.55 178.23L800.55 276.47M434.19 383.47L598.52 47.14M246.19 174.87L802.19 273.11M439.75 384.45L604.08 48.12M247.83 171.51L803.83 269.75M450.87 386.41L615.20 50.08M251.12 164.78L807.12 263.02M456.43 387.39L620.76 51.06M252.76 161.42L808.76 259.66M461.99 388.38L626.32 52.05M254.40 158.06L810.40 256.30M467.55 389.36L631.88 53.03M256.05 154.69L812.05 252.93M473.11 390.34L637.44 54.01M257.69 151.33L813.69 249.57M478.67 391.32L643.00 54.99M259.33 147.97L815.33 246.21M484.23 392.31L648.56 55.98M260.98 144.60L816.98 242.84M489.79 393.29L654.12 56.96M262.62 141.24L818.62 239.48M495.35 394.27L659.68 57.94M264.26 137.88L820.26 236.12M506.47 396.24L670.80 59.91M267.55 131.15L823.55 229.39M512.03 397.22L676.36 60.89M269.19 127.79L825.19 226.03M517.59 398.20L681.92 61.87M270.84 124.42L826.84 222.66M523.15 399.18L687.48 62.85M272.48 121.06L828.48 219.30M528.71 400.17L693.04 63.84M274.12 117.70L830.12 215.94M534.27 401.15L698.60 64.82M275.77 114.33L831.77 212.57M539.83 402.13L704.16 65.80M277.41 110.97L833.41 209.21M545.39 403.11L709.72 66.78M279.05 107.61L835.05 205.85M550.95 404.10L715.28 67.77M280.70 104.24L836.70 202.48M562.07 406.06L726.40 69.73M283.98 97.52L839.98 195.76M567.63 407.04L731.96 70.71M285.63 94.15L841.63 192.39M573.19 408.03L737.52 71.70M287.27 90.79L843.27 189.03M578.75 409.01L743.08 72.68M288.91 87.43L844.91 185.67M584.31 409.99L748.64 73.66M290.56 84.06L846.56 182.30M589.87 410.97L754.20 74.64M292.20 80.70L848.20 178.94M595.43 411.95L759.76 75.62M293.84 77.34L849.84 175.58M600.99 412.94L765.32 76.61M295.49 73.97L851.49 172.21M606.55 413.92L770.88 77.59M297.13 70.61L853.13 168.85M617.67 415.88L782.00 79.55M300.42 63.88L856.42 162.12M623.23 416.87L787.56 80.54M302.06 60.52L858.06 158.76M628.79 417.85L793.12 81.52M303.70 57.16L859.70 155.40M634.35 418.83L798.68 82.50M305.35 53.79L861.35 152.03M639.91 419.81L804.24 83.48M306.99 50.43L862.99 148.67M645.47 420.80L809.80 84.47M308.63 47.07L864.63 145.31M651.03 421.78L815.36 85.45M310.28 43.70L866.28 141.94M656.59 422.76L820.92 86.43M311.92 40.34L867.92 138.58M662.15 423.74L826.48 87.41M313.56 36.98L869.56 135.22M673.27 425.71L837.60 89.38M316.85 30.25L872.85 128.49M678.83 426.69L843.16 90.36M318.49 26.89L874.49 125.13M684.39 427.67L848.72 91.34M320.14 23.52L876.14 121.76M689.95 428.66L854.28 92.33M321.78 20.16L877.78 118.40M695.51 429.64L859.84 93.31M323.42 16.80L879.42 115.04M701.07 430.62L865.40 94.29M325.07 13.43L881.07 111.67M706.63 431.60L870.96 95.27M326.71 10.07L882.71 108.31M712.19 432.59L876.52 96.26M328.35 6.71L884.35 104.95M717.75 433.57L882.08 97.24M330.00 3.34L886.00 101.58" stroke="url(#gmin)" stroke-width="1" fill="none"/><path d="M167.31 336.31L331.64 -0.02M167.31 336.31L723.31 434.55M222.91 346.13L387.24 9.80M183.74 302.68L739.74 400.92M278.51 355.96L442.84 19.63M200.18 269.04L756.18 367.28M334.11 365.78L498.44 29.45M216.61 235.41L772.61 333.65M389.71 375.61L554.04 39.28M233.04 201.78L789.04 300.02M445.31 385.43L609.64 49.10M249.47 168.14L805.47 266.38M500.91 395.25L665.24 58.92M265.91 134.51L821.91 232.75M556.51 405.08L720.84 68.75M282.34 100.88L838.34 199.12M612.11 414.90L776.44 78.57M298.77 67.25L854.77 165.49M667.71 424.73L832.04 88.40M315.21 33.61L871.21 131.85M723.31 434.55L887.64 98.22M331.64 -0.02L887.64 98.22" stroke="url(#gmaj)" stroke-width="1" fill="none"/></g></g>
<rect x="0.5" y="0.5" width="608" height="369" fill="none" stroke="#000" stroke-opacity="0.06"/><defs><clipPath id="cf1"><polygon points="321.3,145.2 377.0,154.4 361.0,187.3 304.6,178.2"/></clipPath><clipPath id="cf2"><polygon points="724.4,134.5 745.6,122.2 773.4,127.2 779.9,144.8 759.2,156.3 731.4,151.4"/></clipPath><clipPath id="ct"><polygon points="383.1,265.2 366.8,298.4 422.3,308.3"/></clipPath></defs><g transform="translate(-173,-51)"><polygon points="321.3,145.2 377.0,154.4 361.0,187.3 304.6,178.2" fill="#9a9a9a"/><g clip-path="url(#cf1)"><path d="M172.87 337.29L337.20 0.96M168.95 332.95L724.95 431.19M178.43 338.27L342.76 1.94M170.60 329.58L726.60 427.82M183.99 339.26L348.32 2.93M172.24 326.22L728.24 424.46M189.55 340.24L353.88 3.91M173.88 322.86L729.88 421.10M195.11 341.22L359.44 4.89M175.53 319.49L731.53 417.73M200.67 342.20L365.00 5.87M177.17 316.13L733.17 414.37M206.23 343.19L370.56 6.86M178.81 312.77L734.81 411.01M211.79 344.17L376.12 7.84M180.46 309.40L736.46 407.64M217.35 345.15L381.68 8.82M182.10 306.04L738.10 404.28M228.47 347.12L392.80 10.79M185.39 299.31L741.39 397.55M234.03 348.10L398.36 11.77M187.03 295.95L743.03 394.19M239.59 349.08L403.92 12.75M188.67 292.59L744.67 390.83M245.15 350.06L409.48 13.73M190.32 289.22L746.32 387.46M250.71 351.05L415.04 14.72M191.96 285.86L747.96 384.10M256.27 352.03L420.60 15.70M193.60 282.50L749.60 380.74M261.83 353.01L426.16 16.68M195.25 279.13L751.25 377.37M267.39 353.99L431.72 17.66M196.89 275.77L752.89 374.01M272.95 354.98L437.28 18.65M198.53 272.41L754.53 370.65M284.07 356.94L448.40 20.61M201.82 265.68L757.82 363.92M289.63 357.92L453.96 21.59M203.46 262.32L759.46 360.56M295.19 358.91L459.52 22.58M205.11 258.95L761.11 357.19M300.75 359.89L465.08 23.56M206.75 255.59L762.75 353.83M306.31 360.87L470.64 24.54M208.39 252.23L764.39 350.47M311.87 361.85L476.20 25.52M210.04 248.86L766.04 347.10M317.43 362.83L481.76 26.50M211.68 245.50L767.68 343.74M322.99 363.82L487.32 27.49M213.32 242.14L769.32 340.38M328.55 364.80L492.88 28.47M214.97 238.77L770.97 337.01M339.67 366.76L504.00 30.43M218.25 232.05L774.25 330.29M345.23 367.75L509.56 31.42M219.90 228.68L775.90 326.92M350.79 368.73L515.12 32.40M221.54 225.32L777.54 323.56M356.35 369.71L520.68 33.38M223.18 221.96L779.18 320.20M361.91 370.69L526.24 34.36M224.83 218.59L780.83 316.83M367.47 371.68L531.80 35.35M226.47 215.23L782.47 313.47M373.03 372.66L537.36 36.33M228.11 211.87L784.11 310.11M378.59 373.64L542.92 37.31M229.76 208.50L785.76 306.74M384.15 374.62L548.48 38.29M231.40 205.14L787.40 303.38M395.27 376.59L559.60 40.26M234.69 198.41L790.69 296.65M400.83 377.57L565.16 41.24M236.33 195.05L792.33 293.29M406.39 378.55L570.72 42.22M237.97 191.69L793.97 289.93M411.95 379.54L576.28 43.21M239.62 188.32L795.62 286.56M417.51 380.52L581.84 44.19M241.26 184.96L797.26 283.20M423.07 381.50L587.40 45.17M242.90 181.60L798.90 279.84M428.63 382.48L592.96 46.15M244.55 178.23L800.55 276.47M434.19 383.47L598.52 47.14M246.19 174.87L802.19 273.11M439.75 384.45L604.08 48.12M247.83 171.51L803.83 269.75M450.87 386.41L615.20 50.08M251.12 164.78L807.12 263.02M456.43 387.39L620.76 51.06M252.76 161.42L808.76 259.66M461.99 388.38L626.32 52.05M254.40 158.06L810.40 256.30M467.55 389.36L631.88 53.03M256.05 154.69L812.05 252.93M473.11 390.34L637.44 54.01M257.69 151.33L813.69 249.57M478.67 391.32L643.00 54.99M259.33 147.97L815.33 246.21M484.23 392.31L648.56 55.98M260.98 144.60L816.98 242.84M489.79 393.29L654.12 56.96M262.62 141.24L818.62 239.48M495.35 394.27L659.68 57.94M264.26 137.88L820.26 236.12M506.47 396.24L670.80 59.91M267.55 131.15L823.55 229.39M512.03 397.22L676.36 60.89M269.19 127.79L825.19 226.03M517.59 398.20L681.92 61.87M270.84 124.42L826.84 222.66M523.15 399.18L687.48 62.85M272.48 121.06L828.48 219.30M528.71 400.17L693.04 63.84M274.12 117.70L830.12 215.94M534.27 401.15L698.60 64.82M275.77 114.33L831.77 212.57M539.83 402.13L704.16 65.80M277.41 110.97L833.41 209.21M545.39 403.11L709.72 66.78M279.05 107.61L835.05 205.85M550.95 404.10L715.28 67.77M280.70 104.24L836.70 202.48M562.07 406.06L726.40 69.73M283.98 97.52L839.98 195.76M567.63 407.04L731.96 70.71M285.63 94.15L841.63 192.39M573.19 408.03L737.52 71.70M287.27 90.79L843.27 189.03M578.75 409.01L743.08 72.68M288.91 87.43L844.91 185.67M584.31 409.99L748.64 73.66M290.56 84.06L846.56 182.30M589.87 410.97L754.20 74.64M292.20 80.70L848.20 178.94M595.43 411.95L759.76 75.62M293.84 77.34L849.84 175.58M600.99 412.94L765.32 76.61M295.49 73.97L851.49 172.21M606.55 413.92L770.88 77.59M297.13 70.61L853.13 168.85M617.67 415.88L782.00 79.55M300.42 63.88L856.42 162.12M623.23 416.87L787.56 80.54M302.06 60.52L858.06 158.76M628.79 417.85L793.12 81.52M303.70 57.16L859.70 155.40M634.35 418.83L798.68 82.50M305.35 53.79L861.35 152.03M639.91 419.81L804.24 83.48M306.99 50.43L862.99 148.67M645.47 420.80L809.80 84.47M308.63 47.07L864.63 145.31M651.03 421.78L815.36 85.45M310.28 43.70L866.28 141.94M656.59 422.76L820.92 86.43M311.92 40.34L867.92 138.58M662.15 423.74L826.48 87.41M313.56 36.98L869.56 135.22M673.27 425.71L837.60 89.38M316.85 30.25L872.85 128.49M678.83 426.69L843.16 90.36M318.49 26.89L874.49 125.13M684.39 427.67L848.72 91.34M320.14 23.52L876.14 121.76M689.95 428.66L854.28 92.33M321.78 20.16L877.78 118.40M695.51 429.64L859.84 93.31M323.42 16.80L879.42 115.04M701.07 430.62L865.40 94.29M325.07 13.43L881.07 111.67M706.63 431.60L870.96 95.27M326.71 10.07L882.71 108.31M712.19 432.59L876.52 96.26M328.35 6.71L884.35 104.95M717.75 433.57L882.08 97.24M330.00 3.34L886.00 101.58" stroke="#101030" stroke-opacity="0.3" stroke-width="1" fill="none"/><path d="M167.31 336.31L331.64 -0.02M167.31 336.31L723.31 434.55M222.91 346.13L387.24 9.80M183.74 302.68L739.74 400.92M278.51 355.96L442.84 19.63M200.18 269.04L756.18 367.28M334.11 365.78L498.44 29.45M216.61 235.41L772.61 333.65M389.71 375.61L554.04 39.28M233.04 201.78L789.04 300.02M445.31 385.43L609.64 49.10M249.47 168.14L805.47 266.38M500.91 395.25L665.24 58.92M265.91 134.51L821.91 232.75M556.51 405.08L720.84 68.75M282.34 100.88L838.34 199.12M612.11 414.90L776.44 78.57M298.77 67.25L854.77 165.49M667.71 424.73L832.04 88.40M315.21 33.61L871.21 131.85M723.31 434.55L887.64 98.22M331.64 -0.02L887.64 98.22" stroke="#101030" stroke-opacity="0.45" stroke-width="1" fill="none"/></g><polygon points="321.3,98.7 377.0,107.9 377.0,154.4 321.3,145.2" fill="#a6a6a6"/><polygon points="321.3,98.7 321.3,134.4 304.6,131.7" fill="#3a3a3a"/><polygon points="304.6,131.7 361.0,140.8 361.0,187.3 304.6,178.2" fill="#a6a6a6"/><path d="M321.3 98.7L377.0 107.9L361.0 140.8L304.6 131.7ZM321.3 98.7L321.3 134.4M377.0 107.9L377.0 154.4L361.0 187.3M361.0 140.8L361.0 187.3M304.6 131.7L304.6 178.2L361.0 187.3M361.0 150.1L361.0 140.8" stroke="#1c1c1c" stroke-width="1.1" fill="none" stroke-linejoin="round" stroke-linecap="round"/><path d="M361.0 151.8L377.0 154.4" stroke="#1c1c1c" stroke-width="1.1" fill="none" stroke-linejoin="round" stroke-linecap="round"/><ellipse cx="499.6" cy="47" rx="28.9" ry="17.5" stroke="#1c1c1c" stroke-width="1.1" fill="none"/><ellipse cx="499.6" cy="93" rx="28.9" ry="17.5" stroke="#1c1c1c" stroke-width="1.1" fill="none"/><path d="M528.5 40L528.5 93" stroke="#1c1c1c" stroke-width="1.1"/><polygon points="543.6,137.8 599.2,147.6 583.2,179.9 527.6,171.2" fill="#a6a10c"/><polygon points="527.6,171.2 583.2,179.9 583.2,226.7 527.6,218.0" fill="#cecd08"/><polygon points="599.2,147.6 599.2,194.4 583.2,226.7 583.2,179.9" fill="#44440c"/><path d="M543.6 137.8L599.2 147.6L599.2 194.4L583.2 226.7L527.6 218.0L527.6 171.2ZM527.6 171.2L583.2 179.9L599.2 147.6M583.2 179.9L583.2 226.7" stroke="#1c1c1c" stroke-width="1.1" fill="none" stroke-linejoin="round" stroke-linecap="round"/><polygon points="724.4,134.5 745.6,122.2 773.4,127.2 779.9,144.8 759.2,156.3 731.4,151.4" fill="#9a9a9a"/><g clip-path="url(#cf2)"><path d="M172.87 337.29L337.20 0.96M168.95 332.95L724.95 431.19M178.43 338.27L342.76 1.94M170.60 329.58L726.60 427.82M183.99 339.26L348.32 2.93M172.24 326.22L728.24 424.46M189.55 340.24L353.88 3.91M173.88 322.86L729.88 421.10M195.11 341.22L359.44 4.89M175.53 319.49L731.53 417.73M200.67 342.20L365.00 5.87M177.17 316.13L733.17 414.37M206.23 343.19L370.56 6.86M178.81 312.77L734.81 411.01M211.79 344.17L376.12 7.84M180.46 309.40L736.46 407.64M217.35 345.15L381.68 8.82M182.10 306.04L738.10 404.28M228.47 347.12L392.80 10.79M185.39 299.31L741.39 397.55M234.03 348.10L398.36 11.77M187.03 295.95L743.03 394.19M239.59 349.08L403.92 12.75M188.67 292.59L744.67 390.83M245.15 350.06L409.48 13.73M190.32 289.22L746.32 387.46M250.71 351.05L415.04 14.72M191.96 285.86L747.96 384.10M256.27 352.03L420.60 15.70M193.60 282.50L749.60 380.74M261.83 353.01L426.16 16.68M195.25 279.13L751.25 377.37M267.39 353.99L431.72 17.66M196.89 275.77L752.89 374.01M272.95 354.98L437.28 18.65M198.53 272.41L754.53 370.65M284.07 356.94L448.40 20.61M201.82 265.68L757.82 363.92M289.63 357.92L453.96 21.59M203.46 262.32L759.46 360.56M295.19 358.91L459.52 22.58M205.11 258.95L761.11 357.19M300.75 359.89L465.08 23.56M206.75 255.59L762.75 353.83M306.31 360.87L470.64 24.54M208.39 252.23L764.39 350.47M311.87 361.85L476.20 25.52M210.04 248.86L766.04 347.10M317.43 362.83L481.76 26.50M211.68 245.50L767.68 343.74M322.99 363.82L487.32 27.49M213.32 242.14L769.32 340.38M328.55 364.80L492.88 28.47M214.97 238.77L770.97 337.01M339.67 366.76L504.00 30.43M218.25 232.05L774.25 330.29M345.23 367.75L509.56 31.42M219.90 228.68L775.90 326.92M350.79 368.73L515.12 32.40M221.54 225.32L777.54 323.56M356.35 369.71L520.68 33.38M223.18 221.96L779.18 320.20M361.91 370.69L526.24 34.36M224.83 218.59L780.83 316.83M367.47 371.68L531.80 35.35M226.47 215.23L782.47 313.47M373.03 372.66L537.36 36.33M228.11 211.87L784.11 310.11M378.59 373.64L542.92 37.31M229.76 208.50L785.76 306.74M384.15 374.62L548.48 38.29M231.40 205.14L787.40 303.38M395.27 376.59L559.60 40.26M234.69 198.41L790.69 296.65M400.83 377.57L565.16 41.24M236.33 195.05L792.33 293.29M406.39 378.55L570.72 42.22M237.97 191.69L793.97 289.93M411.95 379.54L576.28 43.21M239.62 188.32L795.62 286.56M417.51 380.52L581.84 44.19M241.26 184.96L797.26 283.20M423.07 381.50L587.40 45.17M242.90 181.60L798.90 279.84M428.63 382.48L592.96 46.15M244.55 178.23L800.55 276.47M434.19 383.47L598.52 47.14M246.19 174.87L802.19 273.11M439.75 384.45L604.08 48.12M247.83 171.51L803.83 269.75M450.87 386.41L615.20 50.08M251.12 164.78L807.12 263.02M456.43 387.39L620.76 51.06M252.76 161.42L808.76 259.66M461.99 388.38L626.32 52.05M254.40 158.06L810.40 256.30M467.55 389.36L631.88 53.03M256.05 154.69L812.05 252.93M473.11 390.34L637.44 54.01M257.69 151.33L813.69 249.57M478.67 391.32L643.00 54.99M259.33 147.97L815.33 246.21M484.23 392.31L648.56 55.98M260.98 144.60L816.98 242.84M489.79 393.29L654.12 56.96M262.62 141.24L818.62 239.48M495.35 394.27L659.68 57.94M264.26 137.88L820.26 236.12M506.47 396.24L670.80 59.91M267.55 131.15L823.55 229.39M512.03 397.22L676.36 60.89M269.19 127.79L825.19 226.03M517.59 398.20L681.92 61.87M270.84 124.42L826.84 222.66M523.15 399.18L687.48 62.85M272.48 121.06L828.48 219.30M528.71 400.17L693.04 63.84M274.12 117.70L830.12 215.94M534.27 401.15L698.60 64.82M275.77 114.33L831.77 212.57M539.83 402.13L704.16 65.80M277.41 110.97L833.41 209.21M545.39 403.11L709.72 66.78M279.05 107.61L835.05 205.85M550.95 404.10L715.28 67.77M280.70 104.24L836.70 202.48M562.07 406.06L726.40 69.73M283.98 97.52L839.98 195.76M567.63 407.04L731.96 70.71M285.63 94.15L841.63 192.39M573.19 408.03L737.52 71.70M287.27 90.79L843.27 189.03M578.75 409.01L743.08 72.68M288.91 87.43L844.91 185.67M584.31 409.99L748.64 73.66M290.56 84.06L846.56 182.30M589.87 410.97L754.20 74.64M292.20 80.70L848.20 178.94M595.43 411.95L759.76 75.62M293.84 77.34L849.84 175.58M600.99 412.94L765.32 76.61M295.49 73.97L851.49 172.21M606.55 413.92L770.88 77.59M297.13 70.61L853.13 168.85M617.67 415.88L782.00 79.55M300.42 63.88L856.42 162.12M623.23 416.87L787.56 80.54M302.06 60.52L858.06 158.76M628.79 417.85L793.12 81.52M303.70 57.16L859.70 155.40M634.35 418.83L798.68 82.50M305.35 53.79L861.35 152.03M639.91 419.81L804.24 83.48M306.99 50.43L862.99 148.67M645.47 420.80L809.80 84.47M308.63 47.07L864.63 145.31M651.03 421.78L815.36 85.45M310.28 43.70L866.28 141.94M656.59 422.76L820.92 86.43M311.92 40.34L867.92 138.58M662.15 423.74L826.48 87.41M313.56 36.98L869.56 135.22M673.27 425.71L837.60 89.38M316.85 30.25L872.85 128.49M678.83 426.69L843.16 90.36M318.49 26.89L874.49 125.13M684.39 427.67L848.72 91.34M320.14 23.52L876.14 121.76M689.95 428.66L854.28 92.33M321.78 20.16L877.78 118.40M695.51 429.64L859.84 93.31M323.42 16.80L879.42 115.04M701.07 430.62L865.40 94.29M325.07 13.43L881.07 111.67M706.63 431.60L870.96 95.27M326.71 10.07L882.71 108.31M712.19 432.59L876.52 96.26M328.35 6.71L884.35 104.95M717.75 433.57L882.08 97.24M330.00 3.34L886.00 101.58" stroke="#101030" stroke-opacity="0.28" stroke-width="1" fill="none"/><path d="M167.31 336.31L331.64 -0.02M167.31 336.31L723.31 434.55M222.91 346.13L387.24 9.80M183.74 302.68L739.74 400.92M278.51 355.96L442.84 19.63M200.18 269.04L756.18 367.28M334.11 365.78L498.44 29.45M216.61 235.41L772.61 333.65M389.71 375.61L554.04 39.28M233.04 201.78L789.04 300.02M445.31 385.43L609.64 49.10M249.47 168.14L805.47 266.38M500.91 395.25L665.24 58.92M265.91 134.51L821.91 232.75M556.51 405.08L720.84 68.75M282.34 100.88L838.34 199.12M612.11 414.90L776.44 78.57M298.77 67.25L854.77 165.49M667.71 424.73L832.04 88.40M315.21 33.61L871.21 131.85M723.31 434.55L887.64 98.22M331.64 -0.02L887.64 98.22" stroke="#101030" stroke-opacity="0.42" stroke-width="1" fill="none"/></g><polygon points="724.4,134.5 745.6,122.2 773.4,127.2 779.9,144.8 759.2,156.3 731.4,151.4" fill="none" stroke="#1c1c1c" stroke-width="1.1" stroke-linejoin="round"/><polygon points="724.4,88.9 745.6,76.6 745.6,122.2 724.4,134.5" fill="#808080" stroke="#1c1c1c" stroke-width="1.1" stroke-linejoin="round"/><polygon points="745.6,76.6 773.4,81.6 773.4,127.2 745.6,122.2" fill="#a6a6a6" stroke="#1c1c1c" stroke-width="1.1" stroke-linejoin="round"/><polygon points="773.4,81.6 779.9,99.2 779.9,144.8 773.4,127.2" fill="#3a3a3a" stroke="#1c1c1c" stroke-width="1.1" stroke-linejoin="round"/><polygon points="731.4,105.8 724.4,88.9 724.4,134.5 731.4,151.4" fill="#3a3a3a" stroke="#1c1c1c" stroke-width="1.1" stroke-linejoin="round"/><polygon points="779.9,99.2 759.2,110.7 759.2,156.3 779.9,144.8" fill="#808080" stroke="#1c1c1c" stroke-width="1.1" stroke-linejoin="round"/><path d="M271.5 245.2L328 255" stroke="#1c1c1c" stroke-width="1.5"/><polygon points="383.1,265.2 366.8,298.4 422.3,308.3" fill="#8e8e8e"/><g clip-path="url(#ct)"><path d="M172.87 337.29L337.20 0.96M168.95 332.95L724.95 431.19M178.43 338.27L342.76 1.94M170.60 329.58L726.60 427.82M183.99 339.26L348.32 2.93M172.24 326.22L728.24 424.46M189.55 340.24L353.88 3.91M173.88 322.86L729.88 421.10M195.11 341.22L359.44 4.89M175.53 319.49L731.53 417.73M200.67 342.20L365.00 5.87M177.17 316.13L733.17 414.37M206.23 343.19L370.56 6.86M178.81 312.77L734.81 411.01M211.79 344.17L376.12 7.84M180.46 309.40L736.46 407.64M217.35 345.15L381.68 8.82M182.10 306.04L738.10 404.28M228.47 347.12L392.80 10.79M185.39 299.31L741.39 397.55M234.03 348.10L398.36 11.77M187.03 295.95L743.03 394.19M239.59 349.08L403.92 12.75M188.67 292.59L744.67 390.83M245.15 350.06L409.48 13.73M190.32 289.22L746.32 387.46M250.71 351.05L415.04 14.72M191.96 285.86L747.96 384.10M256.27 352.03L420.60 15.70M193.60 282.50L749.60 380.74M261.83 353.01L426.16 16.68M195.25 279.13L751.25 377.37M267.39 353.99L431.72 17.66M196.89 275.77L752.89 374.01M272.95 354.98L437.28 18.65M198.53 272.41L754.53 370.65M284.07 356.94L448.40 20.61M201.82 265.68L757.82 363.92M289.63 357.92L453.96 21.59M203.46 262.32L759.46 360.56M295.19 358.91L459.52 22.58M205.11 258.95L761.11 357.19M300.75 359.89L465.08 23.56M206.75 255.59L762.75 353.83M306.31 360.87L470.64 24.54M208.39 252.23L764.39 350.47M311.87 361.85L476.20 25.52M210.04 248.86L766.04 347.10M317.43 362.83L481.76 26.50M211.68 245.50L767.68 343.74M322.99 363.82L487.32 27.49M213.32 242.14L769.32 340.38M328.55 364.80L492.88 28.47M214.97 238.77L770.97 337.01M339.67 366.76L504.00 30.43M218.25 232.05L774.25 330.29M345.23 367.75L509.56 31.42M219.90 228.68L775.90 326.92M350.79 368.73L515.12 32.40M221.54 225.32L777.54 323.56M356.35 369.71L520.68 33.38M223.18 221.96L779.18 320.20M361.91 370.69L526.24 34.36M224.83 218.59L780.83 316.83M367.47 371.68L531.80 35.35M226.47 215.23L782.47 313.47M373.03 372.66L537.36 36.33M228.11 211.87L784.11 310.11M378.59 373.64L542.92 37.31M229.76 208.50L785.76 306.74M384.15 374.62L548.48 38.29M231.40 205.14L787.40 303.38M395.27 376.59L559.60 40.26M234.69 198.41L790.69 296.65M400.83 377.57L565.16 41.24M236.33 195.05L792.33 293.29M406.39 378.55L570.72 42.22M237.97 191.69L793.97 289.93M411.95 379.54L576.28 43.21M239.62 188.32L795.62 286.56M417.51 380.52L581.84 44.19M241.26 184.96L797.26 283.20M423.07 381.50L587.40 45.17M242.90 181.60L798.90 279.84M428.63 382.48L592.96 46.15M244.55 178.23L800.55 276.47M434.19 383.47L598.52 47.14M246.19 174.87L802.19 273.11M439.75 384.45L604.08 48.12M247.83 171.51L803.83 269.75M450.87 386.41L615.20 50.08M251.12 164.78L807.12 263.02M456.43 387.39L620.76 51.06M252.76 161.42L808.76 259.66M461.99 388.38L626.32 52.05M254.40 158.06L810.40 256.30M467.55 389.36L631.88 53.03M256.05 154.69L812.05 252.93M473.11 390.34L637.44 54.01M257.69 151.33L813.69 249.57M478.67 391.32L643.00 54.99M259.33 147.97L815.33 246.21M484.23 392.31L648.56 55.98M260.98 144.60L816.98 242.84M489.79 393.29L654.12 56.96M262.62 141.24L818.62 239.48M495.35 394.27L659.68 57.94M264.26 137.88L820.26 236.12M506.47 396.24L670.80 59.91M267.55 131.15L823.55 229.39M512.03 397.22L676.36 60.89M269.19 127.79L825.19 226.03M517.59 398.20L681.92 61.87M270.84 124.42L826.84 222.66M523.15 399.18L687.48 62.85M272.48 121.06L828.48 219.30M528.71 400.17L693.04 63.84M274.12 117.70L830.12 215.94M534.27 401.15L698.60 64.82M275.77 114.33L831.77 212.57M539.83 402.13L704.16 65.80M277.41 110.97L833.41 209.21M545.39 403.11L709.72 66.78M279.05 107.61L835.05 205.85M550.95 404.10L715.28 67.77M280.70 104.24L836.70 202.48M562.07 406.06L726.40 69.73M283.98 97.52L839.98 195.76M567.63 407.04L731.96 70.71M285.63 94.15L841.63 192.39M573.19 408.03L737.52 71.70M287.27 90.79L843.27 189.03M578.75 409.01L743.08 72.68M288.91 87.43L844.91 185.67M584.31 409.99L748.64 73.66M290.56 84.06L846.56 182.30M589.87 410.97L754.20 74.64M292.20 80.70L848.20 178.94M595.43 411.95L759.76 75.62M293.84 77.34L849.84 175.58M600.99 412.94L765.32 76.61M295.49 73.97L851.49 172.21M606.55 413.92L770.88 77.59M297.13 70.61L853.13 168.85M617.67 415.88L782.00 79.55M300.42 63.88L856.42 162.12M623.23 416.87L787.56 80.54M302.06 60.52L858.06 158.76M628.79 417.85L793.12 81.52M303.70 57.16L859.70 155.40M634.35 418.83L798.68 82.50M305.35 53.79L861.35 152.03M639.91 419.81L804.24 83.48M306.99 50.43L862.99 148.67M645.47 420.80L809.80 84.47M308.63 47.07L864.63 145.31M651.03 421.78L815.36 85.45M310.28 43.70L866.28 141.94M656.59 422.76L820.92 86.43M311.92 40.34L867.92 138.58M662.15 423.74L826.48 87.41M313.56 36.98L869.56 135.22M673.27 425.71L837.60 89.38M316.85 30.25L872.85 128.49M678.83 426.69L843.16 90.36M318.49 26.89L874.49 125.13M684.39 427.67L848.72 91.34M320.14 23.52L876.14 121.76M689.95 428.66L854.28 92.33M321.78 20.16L877.78 118.40M695.51 429.64L859.84 93.31M323.42 16.80L879.42 115.04M701.07 430.62L865.40 94.29M325.07 13.43L881.07 111.67M706.63 431.60L870.96 95.27M326.71 10.07L882.71 108.31M712.19 432.59L876.52 96.26M328.35 6.71L884.35 104.95M717.75 433.57L882.08 97.24M330.00 3.34L886.00 101.58" stroke="#101030" stroke-opacity="0.26" stroke-width="1" fill="none"/><path d="M167.31 336.31L331.64 -0.02M167.31 336.31L723.31 434.55M222.91 346.13L387.24 9.80M183.74 302.68L739.74 400.92M278.51 355.96L442.84 19.63M200.18 269.04L756.18 367.28M334.11 365.78L498.44 29.45M216.61 235.41L772.61 333.65M389.71 375.61L554.04 39.28M233.04 201.78L789.04 300.02M445.31 385.43L609.64 49.10M249.47 168.14L805.47 266.38M500.91 395.25L665.24 58.92M265.91 134.51L821.91 232.75M556.51 405.08L720.84 68.75M282.34 100.88L838.34 199.12M612.11 414.90L776.44 78.57M298.77 67.25L854.77 165.49M667.71 424.73L832.04 88.40M315.21 33.61L871.21 131.85M723.31 434.55L887.64 98.22M331.64 -0.02L887.64 98.22" stroke="#101030" stroke-opacity="0.42" stroke-width="1" fill="none"/></g><polygon points="383.1,265.2 366.8,298.4 422.3,308.3" fill="none" stroke="#1c1c1c" stroke-width="1.0" stroke-linejoin="round"/><polygon points="478.2,318.2 529.8,287.5 542.5,322.2 571.0,313.0 579.0,357.5 541.0,362.0" fill="none" stroke="#1c1c1c" stroke-width="1.2" stroke-linejoin="round"/><path d="M763.2 401.6V391" stroke="#2a30a8" stroke-width="1.3"/><path d="M761.6 394.5L763.2 389L764.8 394.5Z" fill="#2a30a8"/><path d="M763.4 401.2L766.2 395.8" stroke="#30a030" stroke-width="1.2"/><path d="M763.4 401.8L776 404.3" stroke="#b02828" stroke-width="1.3"/><path d="M771.5 402.4L776.5 404.4L771 405Z" fill="#b02828"/><text x="763.6" y="391.5" font-size="7.5" fill="#333" font-family="Liberation Sans">Z</text><text x="767.3" y="398.2" font-size="7" fill="#444" font-family="Liberation Sans">Y</text><text x="776.6" y="406" font-size="7.5" fill="#333" font-family="Liberation Sans">X</text></g>
</svg>
<div class="a" style="left:172px;top:50px;width:611px;height:372px;border:1px solid #f7f7f6"></div>
<div class="a" style="left:782px;top:51px;width:18px;height:370px;background:#f2f1f0"></div>
<svg class="a" style="left:782px;top:51px" width="18" height="240" viewBox="782 51 18 240">
<g fill="#c8c6c1"><rect x="788" y="53" width="1" height="2"/><rect x="790" y="53" width="1" height="2"/><rect x="792" y="53" width="1" height="2"/></g>
<rect x="783.5" y="58.5" width="14" height="14" rx="2.5" fill="url(#rbt)" stroke="#cfccc7"/>
<rect x="783.5" y="74.5" width="14" height="14" rx="2.5" fill="url(#rbt)" stroke="#cfccc7"/>
<rect x="783.5" y="90.5" width="14" height="14" rx="2.5" fill="url(#rbt)" stroke="#cfccc7"/>
<rect x="783.5" y="106.5" width="14" height="14" rx="2.5" fill="url(#rbt)" stroke="#cfccc7"/>
<rect x="783.5" y="122.5" width="14" height="14" rx="2.5" fill="url(#rbt)" stroke="#cfccc7"/>
<rect x="783.5" y="138.5" width="14" height="14" rx="2.5" fill="url(#rbt)" stroke="#cfccc7"/>
<rect x="783.5" y="154.5" width="14" height="14" rx="2.5" fill="url(#rbt)" stroke="#cfccc7"/>
<rect x="783.5" y="170.5" width="14" height="14" rx="2.5" fill="url(#rbt)" stroke="#cfccc7"/>
<rect x="783.5" y="186.5" width="14" height="14" rx="2.5" fill="url(#rbt)" stroke="#cfccc7"/>
<rect x="783.5" y="202.5" width="14" height="14" rx="2.5" fill="url(#rbt)" stroke="#cfccc7"/>
<rect x="783.5" y="218.5" width="14" height="14" rx="2.5" fill="url(#rbt)" stroke="#cfccc7"/>
<rect x="783.5" y="234.5" width="14" height="14" rx="2.5" fill="url(#rbt)" stroke="#cfccc7"/>
<rect x="783.5" y="250.5" width="14" height="14" rx="2.5" fill="url(#rbt)" stroke="#cfccc7"/>
<rect x="783.5" y="266.5" width="14" height="14" rx="2.5" fill="url(#rbt)" stroke="#cfccc7"/>
<path d="M788.6 65v-1.8a2.2 2.2 0 0 1 4.4 0v1.8" fill="none" stroke="#1a9070" stroke-width="1.5"/><rect x="787.3" y="64.8" width="7.2" height="5.4" rx="0.8" fill="#1a9070"/><rect x="787.3" y="64.8" width="2" height="5.4" fill="#60c0a0"/>
<path d="M787 85.5l9-8" stroke="#1a9070" stroke-width="1.8"/><ellipse cx="791.3" cy="81.3" rx="2.6" ry="1.9" transform="rotate(-40 791.3 81.3)" fill="#1a9070"/>
<path d="M790.8 92.5v8M786.5 101.5h9" stroke="#1a9070" stroke-width="1.8"/>
<circle cx="788.3" cy="110.8" r="2" fill="#1a9070"/><circle cx="793.3" cy="110.8" r="2" fill="#1a9070"/><circle cx="788.3" cy="115.8" r="2" fill="#1a9070"/><circle cx="793.3" cy="115.8" r="2" fill="#1a9070"/><path d="M788.3 110.8h5v5h-5z" fill="#1a9070"/><circle cx="790.8" cy="113.3" r="1.1" fill="#eef"/>
<path d="M787.5 125.5l6.5 6.5M794 125.5l-6.5 6.5" stroke="#1a9070" stroke-width="2.1"/>
<path d="M787 142.5l7.5 4M787 145.5l7.5 4" stroke="#1a9070" stroke-width="1.6"/>
<path d="M794 157.5l-5 5" stroke="#1a9070" stroke-width="1.6"/><circle cx="788.3" cy="163.2" r="1.8" fill="#1a9070"/>
<path d="M790.8 172.5l4 4-4 4-4-4z" fill="none" stroke="#1a9070" stroke-width="1.8"/>
<circle cx="790.8" cy="193" r="4" fill="none" stroke="#1a9070" stroke-width="1.6"/><circle cx="790.8" cy="193" r="1.3" fill="#1a9070"/>
<circle cx="787.5" cy="209" r="1.3" fill="#1a9070"/><circle cx="790.8" cy="209" r="1.3" fill="#1a9070"/><circle cx="794.1" cy="209" r="1.3" fill="#1a9070"/>
<path d="M786.8 223.5l5.5 3" stroke="#1a9070" stroke-width="1.8"/><circle cx="793.5" cy="221.5" r="1.3" fill="#1a9070"/>
<path d="M790.8 237.5v8M786.8 241.5h8" stroke="#1a9070" stroke-width="1.9"/>
<path d="M787.5 261l2.5-2.5M789 256l2-2M793 254.5l1.5 2" stroke="#1a9070" stroke-width="1.6"/><circle cx="792.5" cy="258.5" r="1.4" fill="#1a9070"/>
<rect x="786.6" y="269.3" width="8.4" height="8.2" rx="1" fill="#24b484" stroke="#108a60" stroke-width="0.7"/><circle cx="789.3" cy="274.3" r="1.1" fill="none" stroke="#0a5a40" stroke-width="0.6"/>
</svg>
<svg width="0" height="0" style="position:absolute"><defs><linearGradient id="rbt" x1="0" y1="0" x2="0" y2="1"><stop offset="0" stop-color="#fcfcfb"/><stop offset="1" stop-color="#e8e6e3"/></linearGradient></defs></svg>

<div class="a" style="left:173.5px;top:420.5px;width:143px;height:19.5px;border:1px solid #d6d4cf;border-top:none;border-radius:0 0 3px 3px;background:#f8f8f7"></div>
<svg class="a" style="left:177px;top:425px" width="12" height="10" viewBox="0 0 12 10"><path d="M1 0.5h3v8.5h-3z" fill="#e02818"/><path d="M1 0.5h5v2h-5z" fill="#e02818"/><circle cx="7" cy="5.5" r="3" fill="#2050c0"/><circle cx="7" cy="5.5" r="1.2" fill="#fff"/><path d="M7 1.5v1.5M7 8v1.5M3 5.5h1.5M9.5 5.5h1.5" stroke="#2050c0" stroke-width="1.3"/></svg>
<svg class="a" style="left:301px;top:426px" width="10" height="10" viewBox="0 0 10 10"><path d="M2.3 2.3l5.6 5.6M7.9 2.3l-5.6 5.6" stroke="#606060" stroke-width="2.3"/></svg>
<div class="a" style="left:0;top:440px;width:800px;height:1px;background:#e0deda"></div>
<div class="a" style="left:0;top:441px;width:800px;height:1px;background:#fbfbfa"></div>

<div class="txt" style="left:296.00px;top:9.73px;font-size:10.14px;color:#525252;font-weight:normal;transform:scaleX(0.9552);transform-origin:0 0">Draft</div>
<div class="txt" style="left:31.00px;top:34.34px;font-size:9.42px;color:#525252;font-weight:normal;transform:scaleX(0.9415);transform-origin:0 0">Top</div>
<div class="txt" style="left:103.75px;top:35.17px;font-size:9.28px;color:#525252;font-weight:normal;transform:scaleX(0.9529);transform-origin:0 0">2px</div>
<div class="txt" style="left:134.65px;top:35.17px;font-size:9.28px;color:#525252;font-weight:normal;transform:scaleX(0.9472);transform-origin:0 0">0,20</div>
<div class="txt" style="left:1.60px;top:55.29px;font-size:9.13px;color:#525252;font-weight:normal;transform:scaleX(0.9923);transform-origin:0 0">Combo View</div>
<div class="txt" style="left:5.40px;top:71.04px;font-size:9.42px;color:#525252;font-weight:normal;transform:scaleX(0.9977);transform-origin:0 0">Model</div>
<div class="txt" style="left:41.30px;top:71.89px;font-size:9.13px;color:#525252;font-weight:normal;transform:scaleX(0.9255);transform-origin:0 0">Tasks</div>
<div class="txt" style="left:4.50px;top:90.29px;font-size:9.13px;color:#525252;font-weight:normal;transform:scaleX(1.0245);transform-origin:0 0">Labels &amp; Attributes</div>
<div class="txt" style="left:5.60px;top:255.14px;font-size:9.42px;color:#525252;font-weight:normal;transform:scaleX(0.9999);transform-origin:0 0">Property</div>
<div class="txt" style="left:66.90px;top:255.14px;font-size:9.42px;color:#525252;font-weight:normal;transform:scaleX(0.9767);transform-origin:0 0">Value</div>
<div class="txt" style="left:6.60px;top:426.21px;font-size:8.99px;color:#525252;font-weight:normal;transform:scaleX(1.0148);transform-origin:0 0">View</div>
<div class="txt" style="left:36.70px;top:426.21px;font-size:8.99px;color:#525252;font-weight:normal;transform:scaleX(0.9958);transform-origin:0 0">Data</div>
<div class="txt" style="left:41.90px;top:103.99px;font-size:9.13px;color:#525252;font-weight:normal;transform:scaleX(0.9574);transform-origin:0 0">Edge001</div>
<div class="txt" style="left:41.90px;top:115.66px;font-size:9.13px;color:#525252;font-weight:normal;transform:scaleX(0.9574);transform-origin:0 0">Edge002</div>
<div class="txt" style="left:41.90px;top:127.33px;font-size:9.13px;color:#525252;font-weight:normal;transform:scaleX(0.9231);transform-origin:0 0">Face009</div>
<div class="txt" style="left:41.90px;top:139.00px;font-size:9.13px;color:#525252;font-weight:normal;transform:scaleX(0.9231);transform-origin:0 0">Face010</div>
<div class="txt" style="left:41.90px;top:150.67px;font-size:9.13px;color:#525252;font-weight:normal;transform:scaleX(0.9439);transform-origin:0 0">Face011</div>
<div class="txt" style="left:41.90px;top:162.34px;font-size:9.13px;color:#525252;font-weight:normal;transform:scaleX(0.9231);transform-origin:0 0">Face012</div>
<div class="txt" style="left:41.90px;top:174.01px;font-size:9.13px;color:#a0a0a0;font-weight:normal;transform:scaleX(0.9231);transform-origin:0 0">Face013</div>
<div class="txt" style="left:41.90px;top:185.68px;font-size:9.13px;color:#525252;font-weight:normal;transform:scaleX(0.9231);transform-origin:0 0">Face014</div>
<div class="txt" style="left:41.90px;top:197.35px;font-size:9.13px;color:#525252;font-weight:normal;transform:scaleX(0.9231);transform-origin:0 0">Face015</div>
<div class="txt" style="left:41.90px;top:209.02px;font-size:9.13px;color:#a0a0a0;font-weight:normal;transform:scaleX(0.9231);transform-origin:0 0">Face016</div>
<div class="txt" style="left:41.90px;top:220.69px;font-size:9.13px;color:#525252;font-weight:normal;transform:scaleX(0.9231);transform-origin:0 0">Face017</div>
<div class="txt" style="left:41.90px;top:232.36px;font-size:9.13px;color:#383838;font-weight:bold;transform:scaleX(1.0200);transform-origin:0 0">Wire</div>
<div class="txt" style="left:192.30px;top:426.87px;font-size:9.28px;color:#525252;font-weight:normal;transform:scaleX(0.9824);transform-origin:0 0">F2-T27-ejemplo-work : 1*</div>
<div class="txt" style="left:723.00px;top:446.42px;font-size:9.57px;color:#525252;font-weight:normal;transform:scaleX(0.9251);transform-origin:0 0">104.83 x 63.70 mm</div>
</body></html>
